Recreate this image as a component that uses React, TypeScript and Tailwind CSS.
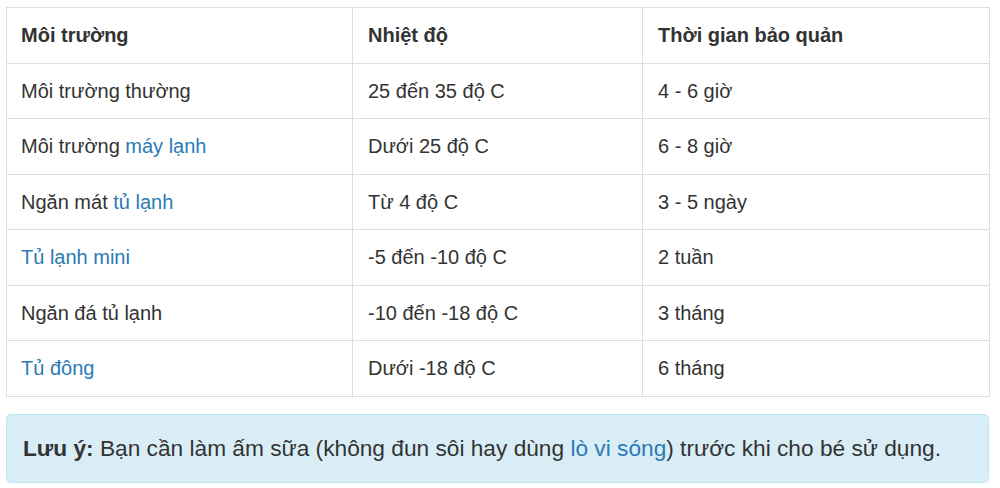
import React from "react";

const L = ({ children }: { children: React.ReactNode }) => (
  <a className="text-[#2a7bb5] no-underline">{children}</a>
);

const rows: [React.ReactNode, string, string][] = [
  ["Môi trường thường", "25 đến 35 độ C", "4 - 6 giờ"],
  [<>Môi trường <L>máy lạnh</L></>, "Dưới 25 độ C", "6 - 8 giờ"],
  [<>Ngăn mát <L>tủ lạnh</L></>, "Từ 4 độ C", "3 - 5 ngày"],
  [<L>Tủ lạnh mini</L>, "-5 đến -10 độ C", "2 tuần"],
  ["Ngăn đá tủ lạnh", "-10 đến -18 độ C", "3 tháng"],
  [<L>Tủ đông</L>, "Dưới -18 độ C", "6 tháng"],
];

export default function App() {
  return (
    <div className="w-[1000px] h-[488px] bg-white pt-[7px] pl-[6px] text-[#333] font-['Liberation_Sans',Arial,sans-serif]">
      <table className="w-[983px] border-collapse table-fixed text-[20px]">
        <colgroup>
          <col className="w-[346px]" />
          <col className="w-[290px]" />
          <col className="w-[347px]" />
        </colgroup>
        <thead>
          <tr className="h-[55.5px]">
            <th className="border border-[#ddd] pl-[14px] pr-[14px] text-left font-bold">Môi trường</th>
            <th className="border border-[#ddd] pl-[15px] pr-[14px] text-left font-bold">Nhiệt độ</th>
            <th className="border border-[#ddd] pl-[15px] pr-[14px] text-left font-bold">Thời gian bảo quản</th>
          </tr>
        </thead>
        <tbody>
          {rows.map((r, i) => (
            <tr key={i} className="h-[55.5px]">
              <td className="border border-[#ddd] pl-[14px] pr-[14px]">{r[0]}</td>
              <td className="border border-[#ddd] pl-[15px] pr-[14px]">{r[1]}</td>
              <td className="border border-[#ddd] pl-[15px] pr-[14px]">{r[2]}</td>
            </tr>
          ))}
        </tbody>
      </table>
      <div className="mt-[17px] w-[983px] h-[69px] rounded-[5px] border border-[#bce8f1] bg-[#d9edf7] pl-[16px] flex items-center text-[22.7px]">
        <p>
          <b>Lưu ý:</b> Bạn cần làm ấm sữa (không đun sôi hay dùng <L>lò vi sóng</L>) trước khi cho bé sử dụng.
        </p>
      </div>
    </div>
  );
}
